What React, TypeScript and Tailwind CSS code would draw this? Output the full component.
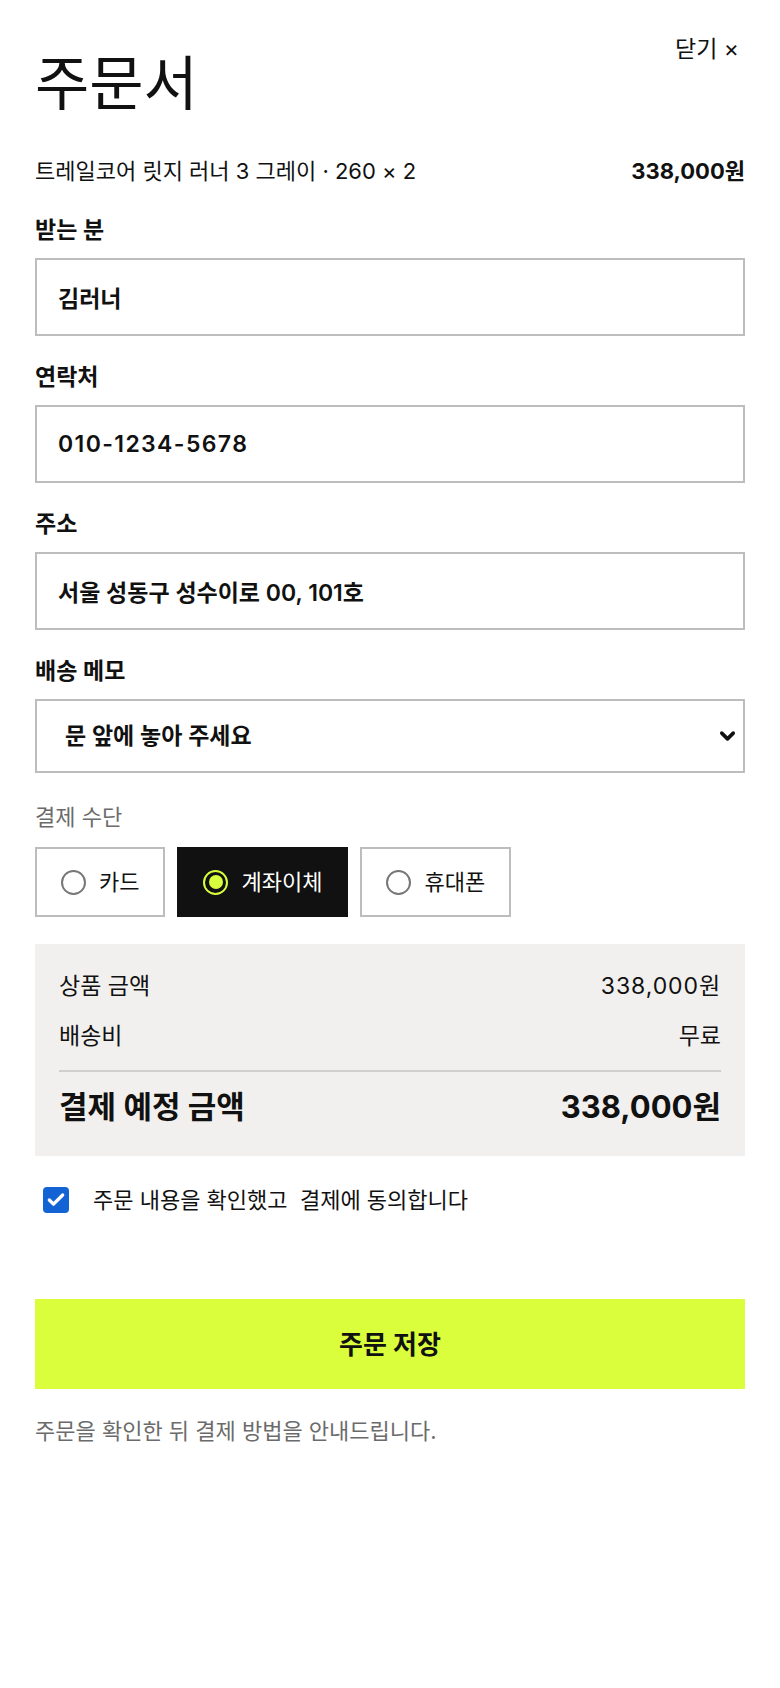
import React, { useState } from 'react';
import { ChevronDown, Check } from 'lucide-react';

type Method = 'card' | 'bank' | 'phone';

const methods: { id: Method; label: string }[] = [
  { id: 'card', label: '카드' },
  { id: 'bank', label: '계좌이체' },
  { id: 'phone', label: '휴대폰' },
];

const fieldBox =
  'w-full h-[78px] border-2 border-[#bdbdbd] bg-white px-[21px] text-[23px] font-semibold text-[#111] outline-none';

const App: React.FC = () => {
  const [name, setName] = useState('김러너');
  const [phone, setPhone] = useState('010-1234-5678');
  const [address, setAddress] = useState('서울 성동구 성수이로 00, 101호');
  const [memo, setMemo] = useState('문 앞에 놓아 주세요');
  const [method, setMethod] = useState<Method>('bank');
  const [agreed, setAgreed] = useState(true);

  return (
    <div
      className="min-h-screen bg-white text-[#111]"
      style={{ fontFamily: 'Inter, "Noto Sans CJK KR", sans-serif' }}
    >
      <div className="px-[35px] pt-[36px] pb-16">
        {/* header */}
        <div className="flex items-start justify-between">
          <h1 className="mt-[16px] text-[59px] leading-[64px] font-normal">주문서</h1>
          <button className="text-[23px] leading-[26px] text-[#111] pr-[6px]">닫기 ×</button>
        </div>

        {/* item */}
        <div className="mt-[40px] flex items-center justify-between text-[22px] leading-[30px]">
          <span>트레일코어 릿지 러너 3 그레이 · 260 × 2</span>
          <span className="font-bold">338,000원</span>
        </div>

        {/* fields */}
        <div className="mt-[30px] flex flex-col gap-[27px]">
          <label className="block">
            <span className="block text-[23px] leading-[28px] font-semibold">받는 분</span>
            <input className={`mt-[14px] ${fieldBox}`} value={name} onChange={e => setName(e.target.value)} />
          </label>
          <label className="block">
            <span className="block text-[23px] leading-[28px] font-semibold">연락처</span>
            <input
              type="tel"
              className={`mt-[14px] tracking-[0.06em] ${fieldBox}`}
              value={phone}
              onChange={e => setPhone(e.target.value)}
            />
          </label>
          <label className="block">
            <span className="block text-[23px] leading-[28px] font-semibold">주소</span>
            <input className={`mt-[14px] ${fieldBox}`} value={address} onChange={e => setAddress(e.target.value)} />
          </label>
          <label className="block">
            <span className="block text-[23px] leading-[28px] font-semibold">배송 메모</span>
            <div className="relative mt-[14px]">
              <select
                className="w-full h-[74px] appearance-none border-2 border-[#bdbdbd] bg-white pl-[28px] pr-12 text-[23px] font-semibold text-[#111] outline-none"
                value={memo}
                onChange={e => setMemo(e.target.value)}
              >
                <option>문 앞에 놓아 주세요</option>
                <option>경비실에 맡겨 주세요</option>
                <option>배송 전 연락 주세요</option>
              </select>
              <ChevronDown
                size={23}
                strokeWidth={3.75}
                className="pointer-events-none absolute right-[6px] top-1/2 -translate-y-1/2 text-[#111]"
              />
            </div>
          </label>
        </div>

        {/* payment */}
        <div className="mt-[30px]">
          <div className="text-[22px] leading-[28px] text-[#6b6b6b]">결제 수단</div>
          <div className="mt-[16px] flex gap-[12px]">
            {methods.map(m => {
              const active = method === m.id;
              return (
                <button
                  key={m.id}
                  onClick={() => setMethod(m.id)}
                  className={
                    active
                      ? 'h-[70px] flex items-center gap-[13px] bg-[#111] border-2 border-[#111] px-[24px] text-[22px] text-white'
                      : 'h-[70px] flex items-center gap-[13px] bg-white border-2 border-[#bdbdbd] px-[24px] text-[22px] text-[#111]'
                  }
                >
                  {active ? (
                    <span className="w-[25px] h-[25px] rounded-full border-[2.5px] border-[#d8ff3d] flex items-center justify-center">
                      <span className="w-[14px] h-[14px] rounded-full bg-[#d8ff3d]" />
                    </span>
                  ) : (
                    <span className="w-[25px] h-[25px] rounded-full border-2 border-[#777] bg-white" />
                  )}
                  <span className="leading-[28px]">{m.label}</span>
                </button>
              );
            })}
          </div>
        </div>

        {/* summary */}
        <div className="mt-[27px] bg-[#f1f0ee] px-6 pt-[26px] pb-[29px]">
          <div className="flex justify-between text-[23px] leading-[32px]">
            <span>상품 금액</span>
            <span className="tracking-[0.04em]">338,000원</span>
          </div>
          <div className="mt-[18px] flex justify-between text-[23px] leading-[32px]">
            <span>배송비</span>
            <span>무료</span>
          </div>
          <div className="mt-[18px] h-[2px] bg-[#cfcfcf]" />
          <div className="mt-[15px] flex justify-between text-[31px] leading-[40px] font-bold">
            <span>결제 예정 금액</span>
            <span>338,000원</span>
          </div>
        </div>

        {/* agree */}
        <label className="mt-[29px] flex items-center pl-[8px] text-[22px] leading-[30px] cursor-pointer">
          <input
            type="checkbox"
            className="sr-only"
            checked={agreed}
            onChange={e => setAgreed(e.target.checked)}
          />
          <span
            className={
              agreed
                ? 'w-[26px] h-[26px] rounded-[4px] bg-[#1463d4] flex items-center justify-center'
                : 'w-[26px] h-[26px] rounded-[4px] border-2 border-[#777] bg-white'
            }
          >
            {agreed && <Check size={20} strokeWidth={4} className="text-white" />}
          </span>
          <span className="ml-[24px]">주문 내용을 확인했고&nbsp;&nbsp;결제에 동의합니다</span>
        </label>

        {/* submit */}
        <button className="mt-[84px] w-full h-[90px] bg-[#dafe3c] text-[26px] font-bold text-[#111]">
          주문 저장
        </button>
        <p className="mt-[27px] text-[22px] leading-[30px] text-[#6b6b6b]">
          주문을 확인한 뒤 결제 방법을 안내드립니다.
        </p>
      </div>
    </div>
  );
};

export default App;
